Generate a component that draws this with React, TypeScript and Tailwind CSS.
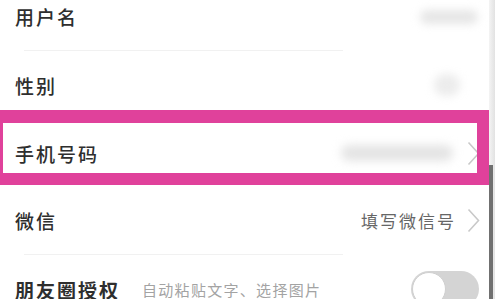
import React from 'react';

const Chevron: React.FC = () => (
  <svg width="13" height="25" viewBox="0 0 13 25" className="shrink-0">
    <path d="M1.5 1.5 L11.5 12.5 L1.5 23.5" fill="none" stroke="#c9c9c9" strokeWidth="1.6" />
  </svg>
);

const Divider: React.FC = () => <div className="ml-6 mr-[152px] h-px bg-[#f1f1f1]" />;

const labelCls = 'text-[19px] tracking-[2px] text-[#2e2e2e] leading-none font-medium';

const App: React.FC = () => {
  return (
    <div className="relative w-[495px] h-[299px] overflow-hidden bg-white font-['Noto_Sans_CJK_SC','Noto_Sans',sans-serif]">
      <div className="-mt-[17px] flex flex-col">
        {/* 用户名 */}
        <div className="flex h-[68px] flex-col">
          <div className="flex flex-1 items-center pl-[15px] pr-[15px]">
            <span className={labelCls}>用户名</span>
            <div className="ml-auto mr-[2px] h-[14px] w-[58px] rounded-full bg-[#e6e6e6] blur-[4px]" />
          </div>
          <Divider />
        </div>

        {/* 性别 */}
        <div className="flex h-[68px] items-center pl-[15px] pr-[15px]">
          <span className={labelCls}>性别</span>
          <div className="ml-auto mr-[20px] h-[22px] w-[26px] rounded-full bg-[#ececec] blur-[4px]" />
        </div>

        {/* 手机号码 */}
        <div className="flex h-[68px] items-center pl-[15px] pr-[15px]">
          <span className={labelCls}>手机号码</span>
          <div className="ml-auto mr-[14px] h-[16px] w-[112px] rounded-full bg-[#e4e4e4] blur-[5px]" />
          <Chevron />
        </div>

        {/* 微信 */}
        <div className="flex h-[68px] flex-col">
          <div className="flex flex-1 items-center pl-[15px] pr-[15px]">
            <span className={labelCls}>微信</span>
            <span className="ml-auto mr-[11px] text-[17px] leading-none tracking-[2px] text-[#666666]">填写微信号</span>
            <Chevron />
          </div>
          <Divider />
        </div>

        {/* 朋友圈授权 */}
        <div className="flex h-[68px] items-center pl-[15px] pr-[16px]">
          <span className={`${labelCls} !font-bold`}>朋友圈授权</span>
          <span className="ml-[22px] text-[15px] leading-none tracking-[1.3px] text-[#a3a3a3]">自动粘贴文字、选择图片</span>
          <div className="ml-auto flex h-[36px] w-[68px] items-center rounded-full bg-[#d4d4d4] p-[1px]">
            <div className="h-[34px] w-[34px] rounded-full border border-[#cfcfcf] bg-white" />
          </div>
        </div>
      </div>

      {/* highlight annotation */}
      <div className="absolute left-[-10px] top-[110px] h-[75px] w-[500px] border-[13px] border-b-[12px] border-[#e0419b]" />

      {/* right edge / scroll indicator */}
      <div className="absolute right-0 top-0 h-full w-[6px] bg-gradient-to-r from-[#f4f4f4] to-[#e2e2e2]" />
      <div className="absolute right-[2px] top-[165px] bottom-0 w-[4px] bg-[#707070]" />
    </div>
  );
};

export default App;
